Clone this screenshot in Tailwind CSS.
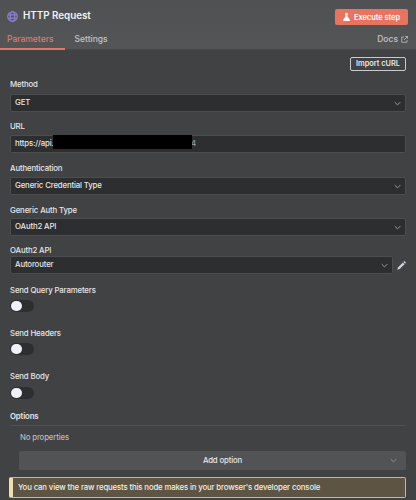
<!DOCTYPE html>
<html lang="en">
<head>
    <meta charset="UTF-8">
    <title>HTTP Request</title>
    <script src="https://cdn.jsdelivr.net/npm/@tailwindcss/browser@4"></script>
</head>
<body class="w-[416px] h-[500px] overflow-hidden bg-[#414244] font-['Inter',sans-serif] text-[#e6e6e8]">
    <!-- header -->
    <div class="h-[50px] bg-gradient-to-b from-[#505153] to-[#545557] border-b border-[#48494b] flex flex-col">
        <div class="flex items-center justify-between pl-[7px] pr-[8px] pt-[9px]">
            <div class="flex items-center gap-[5px] mb-[2px]">
                <svg class="w-[11px] h-[11px] text-[#8e7fd8]" viewBox="0 0 24 24" fill="none" stroke="currentColor" stroke-width="2.4">
                    <circle cx="12" cy="12" r="10.5"/>
                    <ellipse cx="12" cy="12" rx="4.8" ry="10.5"/>
                    <path d="M2 8.5h20M2 15.5h20"/>
                </svg>
                <span class="text-[9.8px] font-semibold text-[#f2f2f3]">HTTP Request</span>
            </div>
            <button class="w-[73px] h-[16px] bg-[#e8735f] rounded-[2px] flex items-center justify-center gap-[4px] text-[7.4px] font-semibold text-white">
                <svg class="w-[7px] h-[8px]" viewBox="0 0 14 16" fill="#fff"><path d="M4 0h6v1.5H9v4.8l4.6 7.4c.6 1-.1 2.3-1.3 2.3H1.7C.5 16-.2 14.7.4 13.7L5 6.3V1.5H4z"/></svg>
                Execute step
            </button>
        </div>
        <div class="flex items-end justify-between mt-auto">
            <div class="flex text-[8.5px] font-medium">
                <span class="w-[64.5px] pl-[7px] h-[17px] border-b-[2px] border-[#e07a66] text-[#e07a66] -mb-px">Parameters</span>
                <span class="pl-[10px] text-[#c3c4c8]">Settings</span>
            </div>
            <div class="flex items-center gap-[3px] pr-[8px] pb-[3px] text-[8.5px] font-medium text-[#c3c4c8]">
                Docs
                <svg class="w-[7px] h-[7px]" viewBox="0 0 14 14" fill="none" stroke="currentColor" stroke-width="1.5"><path d="M6 2H1.5v10.5H12V8M8.5 1H13v4.5M13 1 6 8"/></svg>
            </div>
        </div>
    </div>

    <!-- parameters -->
    <div class="px-[10px] text-[7.8px] tracking-[-0.15px] font-medium">
        <div class="flex justify-end mt-[7px]">
            <button class="w-[56px] h-[14px] border border-[#c9cacc] rounded-[2px] text-[7.4px] tracking-normal font-semibold text-[#e6e6e8] leading-none">Import cURL</button>
        </div>

        <div class="mt-[9px] h-[10px] leading-[8px]">Method</div>
        <div class="mt-[4px] h-[18px] w-[396px] flex items-center justify-between pl-[4px] pr-[4px] bg-[#2d2e30] border border-[#4c4d4f] rounded-[2px] text-[#e6e6e8]">
            GET
            <svg class="w-[7px] h-[5px] text-[#9a9b9e]" viewBox="0 0 10 6" fill="none" stroke="currentColor" stroke-width="1.4"><path d="M1 1l4 4 4-4"/></svg>
        </div>

        <div class="mt-[10px] h-[10px] leading-[8px]">URL</div>
        <div class="mt-[3px] h-[18px] w-[396px] relative flex items-center pl-[4px] bg-[#2d2e30] border border-[#4c4d4f] rounded-[2px] text-[#e6e6e8]">
            https://api.
            <span class="absolute left-[180px] text-[#9a9b9e]">4</span>
            <div class="absolute left-[42px] top-[-1px] w-[139px] h-[14px] bg-black"></div>
        </div>

        <div class="mt-[11px] h-[10px] leading-[8px]">Authentication</div>
        <div class="mt-[3px] h-[18px] w-[396px] flex items-center justify-between pl-[4px] pr-[4px] bg-[#2d2e30] border border-[#4c4d4f] rounded-[2px] text-[#e6e6e8]">
            Generic Credential Type
            <svg class="w-[7px] h-[5px] text-[#9a9b9e]" viewBox="0 0 10 6" fill="none" stroke="currentColor" stroke-width="1.4"><path d="M1 1l4 4 4-4"/></svg>
        </div>

        <div class="mt-[11px] h-[10px] leading-[8px]">Generic Auth Type</div>
        <div class="mt-[2px] h-[18px] w-[396px] flex items-center justify-between pl-[4px] pr-[4px] bg-[#2d2e30] border border-[#4c4d4f] rounded-[2px] text-[#e6e6e8]">
            OAuth2 API
            <svg class="w-[7px] h-[5px] text-[#9a9b9e]" viewBox="0 0 10 6" fill="none" stroke="currentColor" stroke-width="1.4"><path d="M1 1l4 4 4-4"/></svg>
        </div>

        <div class="mt-[10px] h-[10px] leading-[8px]">OAuth2 API</div>
        <div class="flex items-center gap-[4px] w-[396px]">
            <div class="h-[18px] w-[383px] flex items-center justify-between pl-[4px] pr-[4px] bg-[#2d2e30] border border-[#4c4d4f] rounded-[2px] text-[#e6e6e8]">
                Autorouter
                <svg class="w-[7px] h-[5px] text-[#9a9b9e]" viewBox="0 0 10 6" fill="none" stroke="currentColor" stroke-width="1.4"><path d="M1 1l4 4 4-4"/></svg>
            </div>
            <svg class="w-[9px] h-[9px] text-[#cfd0dc]" viewBox="0 0 12 12" fill="currentColor"><path d="M.5 11.5l.7-3L7.8 1.9l2.3 2.3-6.6 6.6zM8.5 1.2 9.3.4c.3-.3.8-.3 1.1 0l1.2 1.2c.3.3.3.8 0 1.1l-.8.8z"/></svg>
        </div>

        <div class="mt-[12px] h-[10px] leading-[8px]">Send Query Parameters</div>
        <div class="mt-[4px] w-[24px] h-[12px] rounded-full bg-[#2d2e30] flex items-center"><span class="w-[10.5px] h-[10.5px] ml-px rounded-full bg-[#f0f0f8]"></span></div>

        <div class="mt-[17px] h-[10px] leading-[8px]">Send Headers</div>
        <div class="mt-[4px] w-[24px] h-[12px] rounded-full bg-[#2d2e30] flex items-center"><span class="w-[10.5px] h-[10.5px] ml-px rounded-full bg-[#f0f0f8]"></span></div>

        <div class="mt-[17px] h-[10px] leading-[8px]">Send Body</div>
        <div class="mt-[5px] w-[24px] h-[12px] rounded-full bg-[#2d2e30] flex items-center"><span class="w-[10.5px] h-[10.5px] ml-px rounded-full bg-[#f0f0f8]"></span></div>

        <div class="mt-[13px] h-[12px] leading-[8px] w-[396px] border-b border-[#505153] font-semibold box-content pb-[1px]">Options</div>
        <div class="mt-[7px] pl-[10px] h-[10px] leading-[8px] text-[#b9babd]">No properties</div>
        <div class="mt-[8px] ml-[9px] w-[387px] h-[19px] relative flex items-center justify-center pl-[20px] bg-[#525355] rounded-[2px] text-[#e6e6e8]">
            Add option
            <svg class="absolute right-[9px] w-[7px] h-[5px] text-[#8f9093]" viewBox="0 0 10 6" fill="none" stroke="currentColor" stroke-width="1.4"><path d="M1 1l4 4 4-4"/></svg>
        </div>
        <div class="mt-[7px] -ml-px w-[397px] h-[21px] flex items-center bg-[#5d5443] border border-[#c9b98f] border-l-[4px] border-l-[#f2dfae] rounded-[2px] pl-[5px] text-[#f0efe9]">You can view the raw requests this node makes in your browser's developer console</div>
    </div>
</body>
</html>
